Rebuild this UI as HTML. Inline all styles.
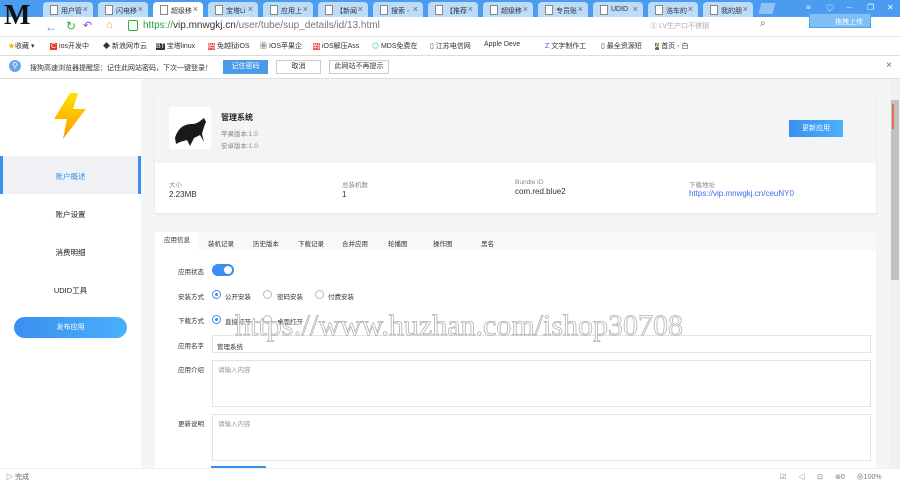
<!DOCTYPE html><html><head><meta charset="utf-8"><style>
*{margin:0;padding:0;box-sizing:border-box}
body{width:900px;height:483px;overflow:hidden;font-family:"Liberation Sans","Noto Sans CJK SC",sans-serif;font-size:7px;color:#333;background:#fff;position:relative}
.a{position:absolute}
.tab{position:absolute;top:2px;height:15px;background:#bcdcf9;border-radius:4px 4px 0 0;font-size:7px;padding:4px 0 0 18px;color:#333}
.tab:before{content:"";position:absolute;left:7px;top:3px;width:6px;height:8px;border:1px solid #888;background:#fff}
.tab:after{content:"×";position:absolute;right:5px;top:2px;color:#666;font-size:9px}
.bm{position:absolute;top:41px;font-size:7px;color:#333}
.nav{position:absolute;left:0;width:141px;text-align:center;font-size:7.5px;color:#222}
.lab{position:absolute;left:178px;font-size:6.5px;color:#333}
.rad{position:absolute;width:9px;height:9px;border:1px solid #bbb;border-radius:50%}
.rad.on{border-color:#3b8ff0}.rad.on:after{content:"";position:absolute;left:2px;top:2px;width:3px;height:3px;border-radius:50%;background:#3b8ff0}
.rt{position:absolute;font-size:6.5px;color:#333}
.box{position:absolute;left:212px;width:659px;border:1px solid #e3e3e3;background:#fff}
.ph{position:absolute;font-size:6.5px;color:#999}
.ic{position:absolute;top:3px;color:#fff;font-size:8px}
</style></head><body>
<div class="a" style="left:0;top:0;width:900px;height:17px;background:#4b9cf0"></div>
<div class="a" style="left:4px;top:1px;width:32px;height:34px;font:bold 28px 'Liberation Serif',serif;color:#111;line-height:30px">M</div>
<div class="tab" style="left:43px;width:50px">用户管</div>
<div class="tab" style="left:98px;width:50px">闪电移</div>
<div class="tab" style="left:153px;width:50px;background:#fff">超级移</div>
<div class="tab" style="left:208px;width:50px">宝塔Li</div>
<div class="tab" style="left:263px;width:50px">应用上</div>
<div class="tab" style="left:318px;width:50px">【新闻</div>
<div class="tab" style="left:373px;width:50px">搜索 -</div>
<div class="tab" style="left:428px;width:50px">【推荐</div>
<div class="tab" style="left:483px;width:50px">超级移</div>
<div class="tab" style="left:538px;width:50px">专员账</div>
<div class="tab" style="left:593px;width:50px">UDID</div>
<div class="tab" style="left:648px;width:50px">浩车的</div>
<div class="tab" style="left:703px;width:50px">我的朋</div>
<div class="a" style="left:760px;top:3px;width:14px;height:11px;background:#8cc4f7;transform:skewX(-15deg)"></div>
<div class="ic" style="left:806px">≡</div>
<div class="ic" style="left:826px">♡</div>
<div class="ic" style="left:847px">–</div>
<div class="ic" style="left:867px">❐</div>
<div class="ic" style="left:887px">✕</div>
<div class="a" style="left:809px;top:13px;width:62px;height:15px;background:#7ec0f5;border:1px solid #4ea3ef;color:#fff;font-size:7px;padding:3px 0 0 25px">拖拽上传</div>
<div class="a" style="left:45px;top:20px;font-size:12px;color:#3a8ee6">←</div>
<div class="a" style="left:66px;top:19px;font-size:12px;color:#2cae3c">↻</div>
<div class="a" style="left:83px;top:19px;font-size:11px;color:#8a3ae0">↶</div>
<div class="a" style="left:106px;top:19px;font-size:11px;color:#f0a020">⌂</div>
<div class="a" style="left:128px;top:20px;width:10px;height:11px;border:1px solid #2cae3c;border-radius:2px"></div>
<div class="a" style="left:143px;top:20px;font-size:10px;color:#333"><span style="color:#2aa33a">https://</span>vip.mnwgkj.cn<span style="color:#777">/user/tube/sup_details/id/13.html</span></div>
<div class="a" style="left:650px;top:21px;font-size:7px;color:#aaa">Ⓢ LV生产口不锈钢</div>
<div class="a" style="left:760px;top:18px;font-size:10px;color:#666">⌕</div>
<div class="a" style="left:0;top:36px;width:900px;height:1px;background:#e5e5e5"></div>
<div class="bm" style="left:8px"><span style="color:#f5b400">★</span>收藏 ▾</div>
<div class="bm" style="left:50px"><span style="background:#e32;color:#fff;padding:0 1px">C</span> ios开发中</div>
<div class="bm" style="left:103px">◆ 新浪网市云</div>
<div class="bm" style="left:156px"><span style="background:#333;color:#fff">BT</span> 宝塔linux</div>
<div class="bm" style="left:208px"><span style="background:#e55;color:#fff">码</span> 免越狱iOS</div>
<div class="bm" style="left:260px">▦ IOS苹果企</div>
<div class="bm" style="left:313px"><span style="background:#e55;color:#fff">码</span> iOS解压Ass</div>
<div class="bm" style="left:372px"><span style="color:#1a9">◎</span> MDS免费在</div>
<div class="bm" style="left:430px">▯ 江苏电信网</div>
<div class="bm" style="left:484px">Apple Deve</div>
<div class="bm" style="left:545px"><span style="color:#3a5ee6">Z</span> 文字制作工</div>
<div class="bm" style="left:601px">▯ 最全资源短</div>
<div class="bm" style="left:655px"><span style="background:#5a7a2a;color:#fff">A</span> 首页 - 白</div>
<div class="a" style="left:0;top:55px;width:900px;height:1px;background:#ddd"></div>
<div class="a" style="left:9px;top:60px;width:12px;height:12px;border-radius:50%;background:#6aa5e8;color:#fff;font-size:8px;text-align:center;line-height:12px">⚲</div>
<div class="a" style="left:30px;top:63px;font-size:7px">搜狗高速浏览器提醒您：记住此网站密码，下次一键登录！</div>
<div class="a" style="left:223px;top:60px;width:45px;height:14px;background:#4a9ae8;color:#fff;font-size:7px;text-align:center;line-height:14px">记住密码</div>
<div class="a" style="left:276px;top:60px;width:45px;height:14px;border:1px solid #ccc;font-size:7px;text-align:center;line-height:12px">取消</div>
<div class="a" style="left:329px;top:60px;width:60px;height:14px;border:1px solid #ccc;font-size:7px;text-align:center;line-height:12px">此网站不再提示</div>
<div class="a" style="left:886px;top:60px;font-size:10px;color:#666">×</div>
<div class="a" style="left:0;top:78px;width:900px;height:1px;background:#ddd"></div>
<div class="a" style="left:141px;top:79px;width:749px;height:389px;background:#f4f5f6"></div>
<div class="a" style="left:890px;top:79px;width:10px;height:389px;background:#f0f0f0"></div>
<div class="a" style="left:891px;top:100px;width:8px;height:180px;background:#c1c1c1"></div>
<div class="a" style="left:892px;top:104px;width:2px;height:25px;background:#e87050"></div>
<svg class="a" style="left:52px;top:92px" width="36" height="48" viewBox="0 0 36 48"><defs><linearGradient id="g" x1="0" y1="0" x2="0" y2="1"><stop offset="0" stop-color="#ffe000"/><stop offset="1" stop-color="#ff9800"/></linearGradient></defs><path d="M18 1 L2 27 L15 27 L11 47 L34 17 L21 17 L26 1Z" fill="url(#g)"/></svg>
<div class="a" style="left:0;top:156px;width:141px;height:38px;background:#eff1f4;border-left:3px solid #3b8ff0;border-right:3px solid #3b8ff0"></div>
<div class="nav" style="top:171px;color:#3b8ff0">账户概述</div>
<div class="nav" style="top:209px">账户设置</div>
<div class="nav" style="top:247px">消费明细</div>
<div class="nav" style="top:285px">UDID工具</div>
<div class="a" style="left:14px;top:317px;width:113px;height:21px;border-radius:11px;background:linear-gradient(90deg,#3a8ff0,#4ab0fb);color:#fff;font-size:7px;text-align:center;line-height:21px">发布应用</div>
<div class="a" style="left:155px;top:94px;width:721px;height:119px;background:#fff;box-shadow:0 1px 3px rgba(0,0,0,.08)"></div>
<div class="a" style="left:155px;top:94px;width:721px;height:69px;background:#f3f4f6"></div>
<div class="a" style="left:169px;top:107px;width:42px;height:42px;background:#fff;border-radius:3px"></div>
<svg class="a" style="left:170px;top:110px" width="40" height="40" viewBox="0 0 40 40"><path d="M5 28 C8 18 14 14 22 14 C28 14 31 10 34 8 L36 12 C34 16 33 20 32 24 L34 32 L30 25 L24 28 L20 36 L17 30 L10 32 L6 34Z" fill="#1a1a1a"/></svg>
<div class="a" style="left:221px;top:112px;font-size:8px;font-weight:bold;color:#222">管理系统</div>
<div class="a" style="left:221px;top:128px;font-size:6.5px;color:#888">苹果版本:1.0</div>
<div class="a" style="left:221px;top:140px;font-size:6.5px;color:#888">安卓版本:1.0</div>
<div class="a" style="left:789px;top:120px;width:54px;height:17px;background:linear-gradient(90deg,#3a8ff0,#4ab0fb);color:#fff;font-size:7px;text-align:center;line-height:17px">更新应用</div>
<div class="a" style="left:169px;top:179px;font-size:6.5px;color:#888">大小</div>
<div class="a" style="left:169px;top:190px;font-size:8px;color:#333">2.23MB</div>
<div class="a" style="left:342px;top:179px;font-size:6.5px;color:#888">总装机数</div>
<div class="a" style="left:342px;top:190px;font-size:8px;color:#333">1</div>
<div class="a" style="left:515px;top:179px;font-size:6.5px;color:#888">Bundle ID</div>
<div class="a" style="left:515px;top:187px;font-size:8px;color:#333">com.red.blue2</div>
<div class="a" style="left:689px;top:179px;font-size:6.5px;color:#888">下载地址</div>
<div class="a" style="left:689px;top:189px;font-size:8px;color:#3b6ee8">https://vip.mnwgkj.cn/ceuNY0</div>
<div class="a" style="left:155px;top:232px;width:721px;height:236px;background:#fff"></div>
<div class="a" style="left:155px;top:232px;width:721px;height:18px;background:#f7f8f9"></div>
<div class="a" style="left:155px;top:232px;width:44px;height:18px;background:#fff;font-size:6.5px;text-align:center;line-height:18px">应用信息</div>
<div class="a" style="left:208px;top:238px;font-size:6.5px;white-space:nowrap"><span style="position:absolute;left:0">装机记录</span><span style="position:absolute;left:45px">历史版本</span><span style="position:absolute;left:90px">下载记录</span><span style="position:absolute;left:134px">合并应用</span><span style="position:absolute;left:180px">轮播图</span><span style="position:absolute;left:225px">操作图</span><span style="position:absolute;left:273px">黑名</span></div>
<div class="lab" style="top:266px">应用状态</div>
<div class="a" style="left:212px;top:264px;width:22px;height:12px;border-radius:6px;background:#3b8ff0"></div>
<div class="a" style="left:224px;top:266px;width:8px;height:8px;border-radius:50%;background:#fff"></div>
<div class="lab" style="top:291px">安装方式</div>
<div class="rad on" style="left:212px;top:290px"></div><div class="rt" style="left:225px;top:291px">公开安装</div>
<div class="rad" style="left:263px;top:290px"></div><div class="rt" style="left:277px;top:291px">密码安装</div>
<div class="rad" style="left:315px;top:290px"></div><div class="rt" style="left:328px;top:291px">付费安装</div>
<div class="lab" style="top:315px">下载方式</div>
<div class="rad on" style="left:212px;top:315px"></div><div class="rt" style="left:225px;top:316px">直接打开</div>
<div class="rad" style="left:263px;top:315px"></div><div class="rt" style="left:277px;top:316px">桌面打开</div>
<div class="lab" style="top:340px">应用名字</div>
<div class="box" style="top:335px;height:18px"></div>
<div class="a" style="left:217px;top:341px;font-size:6.5px">管理系统</div>
<div class="lab" style="top:364px">应用介绍</div>
<div class="box" style="top:360px;height:47px"></div>
<div class="ph" style="left:218px;top:364px">请输入内容</div>
<div class="lab" style="top:418px">更新说明</div>
<div class="box" style="top:414px;height:47px"></div>
<div class="ph" style="left:218px;top:418px">请输入内容</div>
<div class="a" style="left:211px;top:466px;width:55px;height:2px;background:#3b8ff0"></div>
<div class="a" style="left:235px;top:309px;font:30px 'Liberation Serif',serif;color:#fff;-webkit-text-stroke:0.8px #aaa;opacity:.9;white-space:nowrap">https://www.huzhan.com/ishop30708</div>
<div class="a" style="left:0;top:468px;width:900px;height:15px;background:#fff;border-top:1px solid #eee"></div>
<div class="a" style="left:6px;top:472px;font-size:7px;color:#666">▷ 完成</div>
<div class="a" style="left:780px;top:472px;font-size:7px;color:#777;word-spacing:10px">☑ ◁ ⊡ ⊛0 ⊕100%</div>
</body></html>
